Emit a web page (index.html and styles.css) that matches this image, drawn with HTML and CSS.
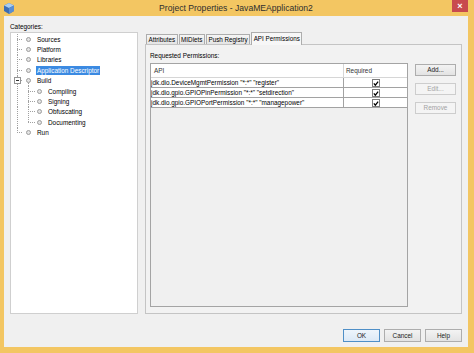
FILE: index.html
```html
<html>

<head>
  <link rel="stylesheet" href="styles.css">
</head>

<body>
  <div class="window">
    <div class="titlebar">
      <svg class="app-icon" width="10" height="11" viewBox="0 0 10 11">
        <polygon points="5,0 10,2.5 10,8 5,11 0,8 0,2.5" fill="#3d6db3"></polygon>
        <polygon points="5,0 10,2.5 5,5 0,2.5" fill="#a9cdf0"></polygon>
        <polygon points="5,5 10,2.5 10,8 5,11" fill="#5a8ed0"></polygon>
      </svg>
      <div class="title">Project Properties - JavaMEApplication2</div>
      <div class="close">&times;</div>
    </div>

    <div class="content">
      <div class="caption">Categories:</div>
      <div class="main">
        <div class="tree">
          <div class="tree-row"><span class="branch"></span><span class="node"><span class="dot"></span></span><span class="text">Sources</span></div>
          <div class="tree-row"><span class="branch"></span><span class="node"><span class="dot"></span></span><span class="text">Platform</span></div>
          <div class="tree-row"><span class="branch"></span><span class="node"><span class="dot"></span></span><span class="text">Libraries</span></div>
          <div class="tree-row"><span class="branch"></span><span class="node"><span class="dot"></span></span><span class="text selected">Application Descriptor</span></div>
          <div class="tree-row"><span class="branch toggled"><span class="toggle"></span></span><span class="node open"><span class="dot"></span></span><span class="text">Build</span></div>
          <div class="tree-row"><span class="pipe"></span><span class="branch child"></span><span class="node"><span class="dot"></span></span><span class="text">Compiling</span></div>
          <div class="tree-row"><span class="pipe"></span><span class="branch child"></span><span class="node"><span class="dot"></span></span><span class="text">Signing</span></div>
          <div class="tree-row"><span class="pipe"></span><span class="branch child"></span><span class="node"><span class="dot"></span></span><span class="text">Obfuscating</span></div>
          <div class="tree-row"><span class="pipe"></span><span class="branch child last"></span><span class="node"><span class="dot"></span></span><span class="text">Documenting</span></div>
          <div class="tree-row"><span class="branch last"></span><span class="node"><span class="dot"></span></span><span class="text">Run</span></div>
        </div>

        <div class="tabs-area">
          <div class="tabs">
            <div class="tab">Attributes</div>
            <div class="tab">MIDlets</div>
            <div class="tab">Push Registry</div>
            <div class="tab active">API Permissions</div>
          </div>
          <div class="tab-panel">
            <div class="panel-caption">Requested Permissions:</div>
            <div class="perm-body">
              <div class="perm-table">
                <div class="perm-row head">
                  <div class="cell">API</div>
                  <div class="cell req">Required</div>
                </div>
                <div class="perm-row">
                  <div class="cell">jdk.dio.DeviceMgmtPermission "*:*" "register"</div>
                  <div class="cell req"><span class="check"><svg width="7" height="7" viewBox="0 0 7 7"><path d="M1 3.4 L2.7 5.4 L6 1.2" fill="none" stroke="#000" stroke-width="1.5"></path></svg></span></div>
                </div>
                <div class="perm-row">
                  <div class="cell">jdk.dio.gpio.GPIOPinPermission "*:*" "setdirection"</div>
                  <div class="cell req"><span class="check"><svg width="7" height="7" viewBox="0 0 7 7"><path d="M1 3.4 L2.7 5.4 L6 1.2" fill="none" stroke="#000" stroke-width="1.5"></path></svg></span></div>
                </div>
                <div class="perm-row">
                  <div class="cell">jdk.dio.gpio.GPIOPortPermission "*:*" "managepower"</div>
                  <div class="cell req"><span class="check"><svg width="7" height="7" viewBox="0 0 7 7"><path d="M1 3.4 L2.7 5.4 L6 1.2" fill="none" stroke="#000" stroke-width="1.5"></path></svg></span></div>
                </div>
              </div>
              <div class="side-buttons">
                <div class="btn">Add...</div>
                <div class="btn disabled">Edit...</div>
                <div class="btn disabled">Remove</div>
              </div>
            </div>
          </div>
        </div>
      </div>

      <div class="footer">
        <div class="btn default">OK</div>
        <div class="btn">Cancel</div>
        <div class="btn">Help</div>
      </div>
    </div>
  </div>
</body>

</html>
```

FILE: styles.css
```css
:root {
  --frame: #f3c662;
  --face: #f0f0f0;
  --dot-v: repeating-linear-gradient(to bottom, #a0a0a0 0 1px, transparent 1px 2px);
  --dot-h: repeating-linear-gradient(to right, #a0a0a0 0 1px, transparent 1px 2px);
}

* {
  box-sizing: border-box;
}

body {
  margin: 0;
  font-family: "Liberation Sans", Arial, sans-serif;
  font-size: 6.4px;
  color: #000;
}

.window {
  height: 100vh;
  background: var(--frame);
  padding: 0 6px 6px 4px;
  display: flex;
  flex-direction: column;
}

/* title bar */
.titlebar {
  height: 16px;
  flex: none;
  display: grid;
  grid-template-columns: 1fr auto 1fr;
  align-items: start;
}

.app-icon {
  margin-top: 3px;
}

.title {
  font-size: 8.6px;
  line-height: 16px;
  color: #2e2e2e;
}

.close {
  justify-self: end;
  width: 16px;
  height: 12px;
  background: #c84a4e;
  color: #fff;
  font-size: 9px;
  font-weight: 700;
  line-height: 12px;
  text-align: center;
}

.content {
  flex: 1;
  min-height: 0;
  background: var(--face);
  padding: 5px 6px 5px 6px;
  display: flex;
  flex-direction: column;
}

.caption {
  line-height: 11px;
}

.main {
  flex: 1;
  min-height: 0;
  display: flex;
  gap: 7px;
}

/* category tree */
.tree {
  width: 128px;
  flex: none;
  background: #fff;
  border: 1px solid #cfcfcf;
  padding: 1px 0 0 6px;
}

.tree-row {
  height: 10.4px;
  display: flex;
  align-items: center;
  white-space: nowrap;
}

.branch {
  width: 6px;
  align-self: stretch;
  background:
    var(--dot-v) left top / 1px 100% no-repeat,
    var(--dot-h) left center / 100% 1px no-repeat;
}

.branch.last {
  background:
    var(--dot-v) left top / 1px 50% no-repeat,
    var(--dot-h) left center / 100% 1px no-repeat;
}

.branch.child {
  width: 7px;
}

.branch.toggled {
  display: flex;
  align-items: center;
}

.toggle {
  width: 7px;
  height: 7px;
  margin-left: -3px;
  border: 1px solid #949494;
  background: #fff;
  display: flex;
  align-items: center;
  justify-content: center;
}

.toggle::before {
  content: "";
  width: 3px;
  height: 1px;
  background: #333;
}

.pipe {
  width: 11px;
  align-self: stretch;
  background: var(--dot-v) left top / 1px 100% no-repeat;
}

.node {
  width: 5px;
  margin-left: 3px;
  align-self: stretch;
  display: flex;
  align-items: center;
}

.branch.child + .node {
  margin-left: 2px;
}

.node.open {
  background: var(--dot-v) 2px bottom / 1px 50% no-repeat;
}

.dot {
  width: 5px;
  height: 5px;
  border-radius: 50%;
  border: 1px solid #9d9d9d;
  background: #e4e4e4;
}

.text {
  margin-left: 6px;
}

.text.selected {
  margin-left: 5px;
  padding: 0 1px;
  line-height: 9px;
  background: #3b8ae2;
  color: #fff;
}

/* tabs */
.tabs-area {
  flex: 1;
  min-width: 0;
  display: flex;
  flex-direction: column;
}

.tabs {
  height: 12px;
  flex: none;
  display: flex;
  align-items: flex-end;
  gap: 1px;
  padding-left: 1px;
}

.tab {
  height: 10px;
  line-height: 9px;
  padding: 0 1.5px;
  font-size: 6.3px;
  border: 1px solid #adadad;
  border-bottom: none;
  background: linear-gradient(#f5f5f5, #e4e4e4);
  white-space: nowrap;
}

.tab.active {
  height: 13px;
  line-height: 11px;
  margin-bottom: -1px;
  background: #f7f7f7;
  position: relative;
  z-index: 1;
}

.tab-panel {
  flex: 1;
  min-height: 0;
  border: 1px solid #c4c4c4;
  background: #f2f2f2;
  padding: 6px 5px 6px 4px;
  display: flex;
  flex-direction: column;
}

.panel-caption {
  line-height: 9px;
  margin-bottom: 3px;
}

.perm-body {
  flex: 1;
  min-height: 0;
  display: flex;
  gap: 7px;
}

/* permission table */
.perm-table {
  flex: 1;
  min-width: 0;
  border: 1px solid #a4a4a4;
  background: var(--face);
  display: flex;
  flex-direction: column;
}

.perm-row {
  height: 10px;
  flex: none;
  display: grid;
  grid-template-columns: 1fr 64px;
  background: #fff;
  border-bottom: 1px solid #a2a2a2;
}

.perm-row.head {
  height: 14px;
  border-bottom-color: #d6d6d6;
  color: #333;
}

.cell {
  line-height: 9px;
  white-space: nowrap;
  overflow: hidden;
}

.head .cell {
  line-height: 13px;
  padding-left: 3px;
}

.cell.req {
  border-left: 1px solid #a2a2a2;
  display: flex;
  align-items: center;
  justify-content: center;
}

.head .cell.req {
  border-left-color: #d6d6d6;
  justify-content: flex-start;
  padding-left: 2px;
}

.check {
  width: 8px;
  height: 8px;
  border: 1px solid #7c7c7c;
  background: #fff;
  display: flex;
}

/* buttons */
.side-buttons {
  width: 41px;
  flex: none;
  display: flex;
  flex-direction: column;
  gap: 7px;
  padding-top: 1px;
}

.btn {
  height: 12px;
  border: 1px solid #adadad;
  background: linear-gradient(#f3f3f3, #e3e3e3);
  text-align: center;
  line-height: 10px;
  color: #222;
}

.btn.disabled {
  color: #a3a3a3;
  border-color: #cdcdcd;
  background: #f4f4f4;
}

.footer {
  flex: none;
  margin-top: 15px;
  display: flex;
  justify-content: flex-end;
  gap: 4px;
}

.footer .btn {
  width: 37px;
  height: 13px;
  line-height: 11px;
}

.footer .btn.default {
  border-color: #4f8fc7;
  background: linear-gradient(#eef5fc, #dce9f6);
}
```
